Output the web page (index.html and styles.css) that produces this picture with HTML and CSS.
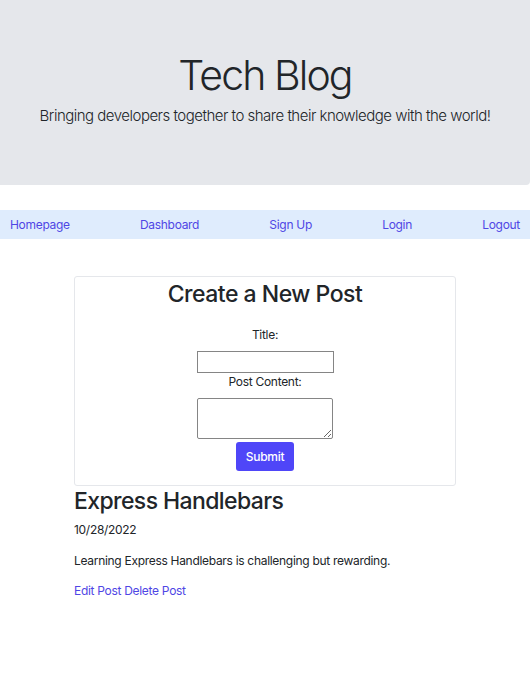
FILE: index.html
```html
<!DOCTYPE html>
<html>
<head>
<meta charset="utf-8">
<link rel="stylesheet" href="styles.css">
</head>
<body>
<header class="hero">
  <h1 class="hero-title">Tech Blog</h1>
  <p class="hero-sub">Bringing developers together to share their knowledge with the world!</p>
</header>
<nav class="nav">
  <a href="#">Homepage</a>
  <a href="#">Dashboard</a>
  <a href="#">Sign Up</a>
  <a href="#">Login</a>
  <a href="#">Logout</a>
</nav>
<main class="container">
  <section class="card">
    <h2 class="card-title">Create a New Post</h2>
    <form class="post-form">
      <label class="label">Title:</label>
      <input class="input" type="text">
      <label class="label label-2">Post Content:</label>
      <textarea class="textarea"></textarea>
      <button class="btn" type="button">Submit</button>
    </form>
  </section>
  <article class="post">
    <h2 class="post-title">Express Handlebars</h2>
    <p class="post-date">10/28/2022</p>
    <p class="post-body">Learning Express Handlebars is challenging but rewarding.</p>
    <p class="post-links"><a href="#">Edit Post</a> <a href="#">Delete Post</a></p>
  </article>
</main>
</body>
</html>
```
FILE: styles.css
```css
* { box-sizing: border-box; }
body {
  margin: 0;
  font-family: Inter, "Noto Sans", sans-serif;
  color: #212529;
  background: #fff;
}
a { color: #4f46e5; text-decoration: none; }
.hero {
  background: #e5e7eb;
  height: 185px;
  padding-top: 50px;
  text-align: center;
  border-bottom-right-radius: 4px;
}
.hero-title {
  margin: 0;
  font-size: 41px;
  font-weight: 300;
  line-height: 50px;
  letter-spacing: -1.9px;
}
.hero-sub {
  margin: 4px 0 0;
  font-size: 15px;
  font-weight: 300;
  line-height: 24px;
  letter-spacing: -0.5px;
}
.nav {
  margin-top: 25px;
  background: #dfecfd;
  height: 29px;
  padding: 0 10px;
  display: flex;
  justify-content: space-between;
  align-items: center;
  font-size: 12px;
  letter-spacing: -0.3px;
}
.container {
  width: 382px;
  margin: 37px auto 0;
}
.card {
  border: 1px solid #e5e7eb;
  border-radius: 3px;
  padding: 2px 0 14px;
  text-align: center;
}
.card-title {
  margin: 0;
  font-size: 23px;
  font-weight: 500;
  line-height: 30px;
  letter-spacing: -0.5px;
}
.post-form {
  display: flex;
  flex-direction: column;
  align-items: center;
  margin-top: 18px;
  font-size: 12px;
  letter-spacing: -0.3px;
}
.label { line-height: 16px; }
.input {
  margin-top: 8px;
  width: 137px;
  height: 22px;
  border: 1px solid #858585;
  border-radius: 0;
  padding: 0;
}
.label-2 { margin-top: 1px; }
.textarea {
  margin-top: 8px;
  width: 136px;
  height: 41px;
  border: 1px solid #858585;
  border-radius: 2px;
  resize: vertical;
  padding: 0;
}
.btn {
  margin-top: 3px;
  background: #4f46f8;
  color: #fff;
  border: none;
  border-radius: 3px;
  font-family: inherit;
  font-size: 12px;
  font-weight: 500;
  letter-spacing: -0.3px;
  width: 58px;
  height: 29px;
}
.post-title {
  margin: 0;
  font-size: 23px;
  font-weight: 500;
  line-height: 30px;
  letter-spacing: -0.6px;
}
.post-date, .post-body, .post-links {
  font-size: 12px;
  line-height: 16px;
  letter-spacing: -0.3px;
}
.post-date { margin: 6px 0 0; }
.post-body { margin: 15px 0 0; }
.post-links { margin: 14px 0 0; }
```
